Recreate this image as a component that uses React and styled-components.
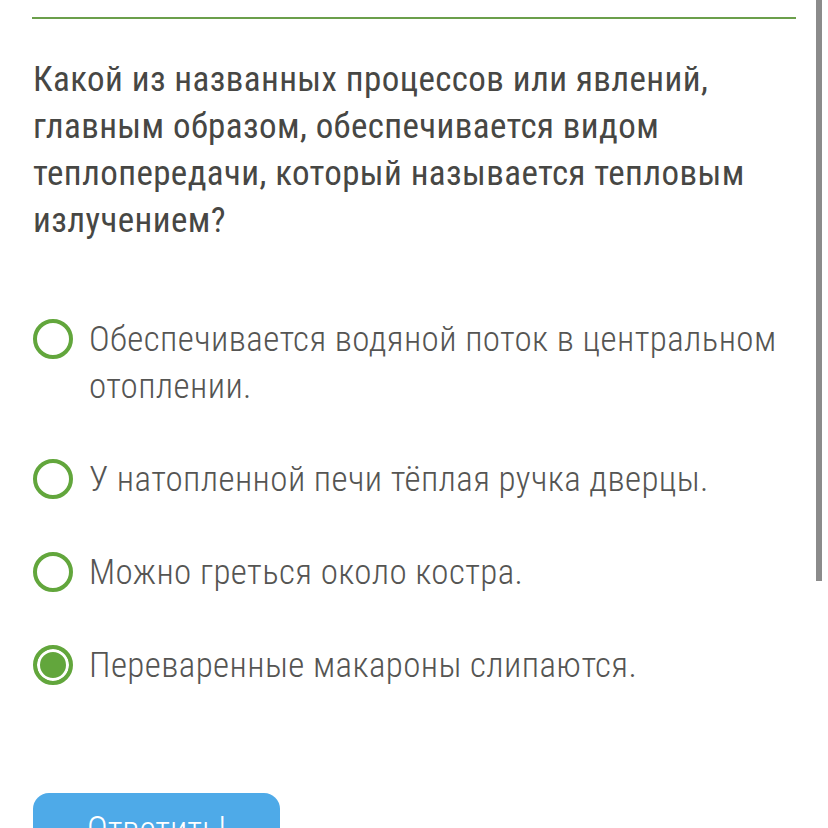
import styled, { createGlobalStyle } from 'styled-components';

const colors = {
  green: '#62a63c',
  line: '#6b9f4b',
  question: '#474744',
  option: '#555553',
  button: '#4eaae8',
  thumb: '#8b8b8b',
};

const GlobalStyle = createGlobalStyle`
  html, body {
    margin: 0;
    padding: 0;
    background: #ffffff;
    overflow: hidden;
  }
  body {
    font-family: 'Roboto Condensed', 'Roboto', sans-serif;
  }
`;

const Page = styled.div`
  position: relative;
  width: 828px;
  height: 828px;
  overflow: hidden;
  padding: 17px 32px 0 33px;
  box-sizing: border-box;
`;

const Divider = styled.div`
  height: 2px;
  background: ${colors.line};
  margin-left: -1px;
`;

const Question = styled.h2`
  margin: 37px 0 0;
  font-size: 35px;
  line-height: 47px;
  font-weight: 400;
  color: ${colors.question};
  letter-spacing: 0.4px;
`;

const Options = styled.ul`
  list-style: none;
  margin: 72px 0 0;
  padding: 0;
  display: flex;
  flex-direction: column;
  gap: 46px;
`;

const Option = styled.li`
  display: flex;
  align-items: flex-start;
  gap: 16px;
`;

const Radio = styled.span`
  flex: none;
  width: 40px;
  height: 40px;
  margin-top: 3px;
  border-radius: 50%;
  border: 4px solid ${colors.green};
  box-sizing: border-box;
  background: ${({ checked }) => (checked ? colors.green : '#fff')};
  box-shadow: ${({ checked }) => (checked ? 'inset 0 0 0 3px #fff' : 'none')};
`;

const Label = styled.span`
  font-size: 35px;
  line-height: 47px;
  font-weight: 300;
  color: ${colors.option};
  letter-spacing: 0.4px;
`;

const Button = styled.button`
  margin-top: 104px;
  width: 247px;
  height: 72px;
  border: none;
  border-radius: 16px;
  background: ${colors.button};
  color: #fff;
  font-family: inherit;
  font-size: 35px;
  font-weight: 300;
  padding: 0;
  text-align: center;
`;

const Thumb = styled.div`
  position: absolute;
  top: 0;
  right: 6px;
  width: 6px;
  height: 581px;
  background: ${colors.thumb};
`;

const options = [
  { text: 'Обеспечивается водяной поток в центральном отоплении.' },
  { text: 'У натопленной печи тёплая ручка дверцы.' },
  { text: 'Можно греться около костра.' },
  { text: 'Переваренные макароны слипаются.', checked: true },
];

const App = () => (
  <>
    <GlobalStyle />
    <Page>
      <Divider />
      <Question>
        Какой из названных процессов или явлений, главным образом, обеспечивается видом
        теплопередачи, который называется тепловым излучением?
      </Question>
      <Options>
        {options.map((o) => (
          <Option key={o.text}>
            <Radio checked={o.checked} />
            <Label>{o.text}</Label>
          </Option>
        ))}
      </Options>
      <Button>Ответить!</Button>
      <Thumb />
    </Page>
  </>
);

export default App;
